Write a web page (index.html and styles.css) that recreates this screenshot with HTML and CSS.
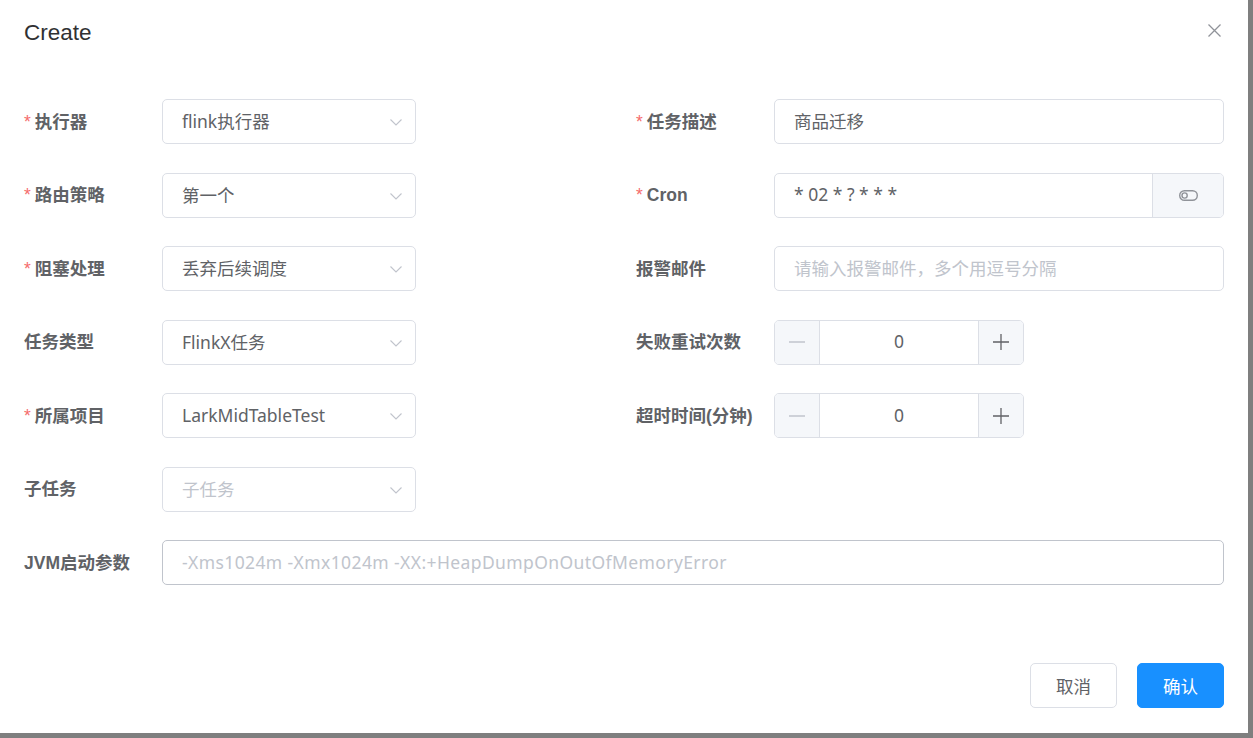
FILE: index.html
```html
<!DOCTYPE html>
<html lang="zh-CN">
<head>
<meta charset="utf-8">
<title>Create</title>
<link rel="stylesheet" href="styles.css">
</head>
<body>
<div class="dialog">
  <div class="dialog-header">
    <span class="dialog-title">Create</span>
    <span class="dialog-close">
      <svg viewBox="0 0 13 13" width="13" height="13"><path d="M0.5 0.5 L12.5 12.5 M12.5 0.5 L0.5 12.5" stroke="#909399" stroke-width="1.3" fill="none"/></svg>
    </span>
  </div>
  <div class="dialog-body">
    <div class="form">
      <div class="item">
        <label class="label req">执行器</label>
        <div class="control select"><span class="value">flink执行器</span><svg class="arrow" viewBox="0 0 12 7" width="12" height="7"><path d="M0.5 0.5 L6 6 L11.5 0.5" stroke="#C0C4CC" stroke-width="1.1" fill="none"/></svg></div>
      </div>
      <div class="item">
        <label class="label req">任务描述</label>
        <div class="control input wide"><span class="value">商品迁移</span></div>
      </div>

      <div class="item">
        <label class="label req">路由策略</label>
        <div class="control select"><span class="value">第一个</span><svg class="arrow" viewBox="0 0 12 7" width="12" height="7"><path d="M0.5 0.5 L6 6 L11.5 0.5" stroke="#C0C4CC" stroke-width="1.1" fill="none"/></svg></div>
      </div>
      <div class="item">
        <label class="label req latin">Cron</label>
        <div class="group wide">
          <div class="group-input"><span class="value">* 02 * ? * * *</span></div>
          <div class="group-append">
            <svg viewBox="0 0 19 11" width="19" height="11"><rect x="0.7" y="0.7" width="17.6" height="9.6" rx="4.8" stroke="#909399" stroke-width="1.4" fill="none"/><circle cx="5.6" cy="5.5" r="2.6" stroke="#909399" stroke-width="1.4" fill="none"/></svg>
          </div>
        </div>
      </div>

      <div class="item">
        <label class="label req">阻塞处理</label>
        <div class="control select"><span class="value">丢弃后续调度</span><svg class="arrow" viewBox="0 0 12 7" width="12" height="7"><path d="M0.5 0.5 L6 6 L11.5 0.5" stroke="#C0C4CC" stroke-width="1.1" fill="none"/></svg></div>
      </div>
      <div class="item">
        <label class="label">报警邮件</label>
        <div class="control input wide"><span class="placeholder">请输入报警邮件，多个用逗号分隔</span></div>
      </div>

      <div class="item">
        <label class="label">任务类型</label>
        <div class="control select"><span class="value">FlinkX任务</span><svg class="arrow" viewBox="0 0 12 7" width="12" height="7"><path d="M0.5 0.5 L6 6 L11.5 0.5" stroke="#C0C4CC" stroke-width="1.1" fill="none"/></svg></div>
      </div>
      <div class="item">
        <label class="label">失败重试次数</label>
        <div class="number">
          <span class="num-btn minus"><svg viewBox="0 0 16 2" width="16" height="2"><path d="M0 1 H16" stroke="#C0C4CC" stroke-width="1.4"/></svg></span>
          <span class="num-value">0</span>
          <span class="num-btn plus"><svg viewBox="0 0 16 16" width="16" height="16"><path d="M0 8 H16 M8 0 V16" stroke="#606266" stroke-width="1.3"/></svg></span>
        </div>
      </div>

      <div class="item">
        <label class="label req">所属项目</label>
        <div class="control select"><span class="value">LarkMidTableTest</span><svg class="arrow" viewBox="0 0 12 7" width="12" height="7"><path d="M0.5 0.5 L6 6 L11.5 0.5" stroke="#C0C4CC" stroke-width="1.1" fill="none"/></svg></div>
      </div>
      <div class="item">
        <label class="label">超时时间(分钟)</label>
        <div class="number">
          <span class="num-btn minus"><svg viewBox="0 0 16 2" width="16" height="2"><path d="M0 1 H16" stroke="#C0C4CC" stroke-width="1.4"/></svg></span>
          <span class="num-value">0</span>
          <span class="num-btn plus"><svg viewBox="0 0 16 16" width="16" height="16"><path d="M0 8 H16 M8 0 V16" stroke="#606266" stroke-width="1.3"/></svg></span>
        </div>
      </div>

      <div class="item left-only">
        <label class="label">子任务</label>
        <div class="control select"><span class="placeholder">子任务</span><svg class="arrow" viewBox="0 0 12 7" width="12" height="7"><path d="M0.5 0.5 L6 6 L11.5 0.5" stroke="#C0C4CC" stroke-width="1.1" fill="none"/></svg></div>
      </div>

      <div class="item full">
        <label class="label">JVM启动参数</label>
        <div class="control input jvm"><span class="placeholder jvm-text">-Xms1024m -Xmx1024m -XX:+HeapDumpOnOutOfMemoryError</span></div>
      </div>
    </div>
  </div>
  <div class="dialog-footer">
    <button class="btn">取消</button>
    <button class="btn primary">确认</button>
  </div>
</div>
</body>
</html>
```

FILE: styles.css
```css
html, body {
  margin: 0;
  padding: 0;
}

body {
  width: 1253px;
  height: 738px;
  overflow: hidden;
  background: #7f7f7f;
  font-family: "Liberation Sans", "Noto Sans CJK SC", sans-serif;
}

.dialog {
  width: 1248px;
  height: 733px;
  background: #ffffff;
  display: flex;
  flex-direction: column;
  box-sizing: border-box;
}

.dialog-header {
  display: flex;
  justify-content: space-between;
  align-items: flex-start;
  padding: 20px 27px 0 24px;
  height: 45px;
  box-sizing: border-box;
}

.dialog-title {
  font-size: 22.5px;
  line-height: 26px;
  color: #303133;
}

.dialog-close {
  display: block;
  margin-top: 4px;
  width: 13px;
  height: 13px;
}

.dialog-close svg {
  display: block;
}

.dialog-body {
  padding: 54px 24px 0 24px;
}

.form {
  display: grid;
  grid-template-columns: 612px 588px;
  grid-auto-rows: 45px;
  row-gap: 28.5px;
}

.item {
  display: flex;
  align-items: center;
}

.item.left-only {
  grid-column: 1;
}

.item.full {
  grid-column: 1 / -1;
}

.label {
  flex: none;
  width: 138px;
  font-size: 17.5px;
  font-weight: 700;
  color: #606266;
  white-space: nowrap;
  padding-bottom: 3px;
}

.label.latin {
  padding-bottom: 0;
}

.label.req::before {
  content: "*";
  color: #F56C6C;
  font-weight: 400;
  margin-right: 4px;
}

.control {
  height: 45px;
  box-sizing: border-box;
  border: 1px solid #DCDFE6;
  border-radius: 5px;
  display: flex;
  align-items: center;
  padding: 0 13px 2px 19px;
  font-family: "Noto Sans", "Noto Sans CJK SC", sans-serif;
  font-size: 17.5px;
  color: #606266;
  background: #fff;
}

.select {
  width: 254px;
  justify-content: space-between;
}

.select .arrow {
  display: block;
  margin-top: 4px;
}

.wide {
  width: 450px;
}

.jvm {
  flex: 1;
  border-color: #C0C4CC;
}

.value {
  white-space: nowrap;
}

.placeholder {
  color: #C0C4CC;
  white-space: nowrap;
}

.jvm-text {
  letter-spacing: 0.4px;
}

.group {
  height: 45px;
  box-sizing: border-box;
  border: 1px solid #DCDFE6;
  border-radius: 5px;
  display: flex;
  overflow: hidden;
  font-family: "Noto Sans", "Noto Sans CJK SC", sans-serif;
  font-size: 17.5px;
  color: #606266;
}

.group-input {
  flex: 1;
  display: flex;
  align-items: center;
  padding: 0 0 2px 19px;
}

.group-append {
  width: 71px;
  box-sizing: border-box;
  border-left: 1px solid #DCDFE6;
  background: #F5F7FA;
  display: flex;
  align-items: center;
  justify-content: center;
}

.group-append svg {
  display: block;
}

.number {
  width: 250px;
  height: 45px;
  box-sizing: border-box;
  border: 1px solid #DCDFE6;
  border-radius: 5px;
  display: flex;
  overflow: hidden;
  font-family: "Noto Sans", "Noto Sans CJK SC", sans-serif;
  font-size: 17.5px;
  color: #606266;
}

.num-btn {
  width: 45px;
  flex: none;
  box-sizing: border-box;
  background: #F5F7FA;
  display: flex;
  align-items: center;
  justify-content: center;
}

.num-btn svg {
  display: block;
}

.num-btn.minus {
  border-right: 1px solid #DCDFE6;
}

.num-btn.plus {
  border-left: 1px solid #DCDFE6;
}

.num-value {
  flex: 1;
  display: flex;
  align-items: center;
  justify-content: center;
  padding-bottom: 2px;
}

.dialog-footer {
  margin-top: auto;
  display: flex;
  justify-content: flex-end;
  gap: 20px;
  padding: 0 24px 25px 0;
}

.btn {
  width: 87px;
  height: 45px;
  box-sizing: border-box;
  border: 1px solid #DCDFE6;
  border-radius: 5px;
  background: #fff;
  color: #606266;
  font-family: "Liberation Sans", "Noto Sans CJK SC", sans-serif;
  font-size: 17.5px;
  padding: 0;
  cursor: pointer;
}

.btn.primary {
  background: #1890FF;
  border-color: #1890FF;
  color: #fff;
}
```
